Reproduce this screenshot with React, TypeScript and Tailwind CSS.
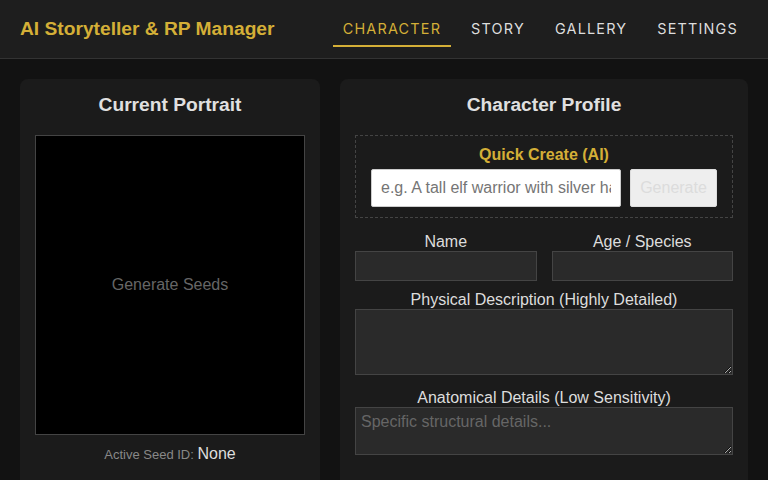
const tabs = ["Character", "Story", "Gallery", "Settings"];

function Field({ label, children }: { label: string; children: React.ReactNode }) {
  return (
    <div className="flex flex-col">
      <label className="text-center text-[16px] leading-[18px] text-[#dddddd]">{label}</label>
      {children}
    </div>
  );
}

export default function App() {
  return (
    <div className="min-h-screen bg-[#121212] font-['Liberation_Sans',Arial,sans-serif] text-[#e0e0e0]">
      <header className="flex h-[59px] items-center justify-between border-b border-[#333333] bg-[#1e1e1e] px-5">
        <h1 className="text-[19.2px] font-bold text-[#d4af37]">AI Storyteller &amp; RP Manager</h1>
        <nav className="flex h-full items-end gap-[10px] font-['Inter',sans-serif]">
          {tabs.map((t, i) => (
            <button
              key={t}
              className={
                i === 0
                  ? "mb-[11px] h-[38px] border-b-2 border-[#d4af37] px-[10px] pt-[3px] text-[14.4px] uppercase tracking-[1.2px] text-[#d4af37]"
                  : "mb-[11px] h-[38px] border-b-2 border-transparent px-[10px] pt-[3px] text-[14.4px] uppercase tracking-[1.2px] text-[#dddddd]"
              }
            >
              {t}
            </button>
          ))}
        </nav>
      </header>

      <main className="flex items-start gap-5 p-5">
        <section className="flex w-[300px] flex-col rounded-lg bg-[#1b1b1b] px-[15px] pt-[14px] pb-[40px]">
          <h2 className="text-center text-[19.2px] font-bold leading-[24px] text-[#e0e0e0]">Current Portrait</h2>
          <div className="mt-[18px] flex h-[300px] w-[270px] items-center justify-center border border-[#444444] bg-black">
            <span className="text-[16px] text-[#666666]">Generate Seeds</span>
          </div>
          <p className="mt-[7px] text-center">
            <span className="text-[13px] text-[#888888]">Active Seed ID: </span>
            <span className="text-[16px] text-[#dddddd]">None</span>
          </p>
        </section>

        <section className="flex w-[408px] flex-col rounded-lg bg-[#1b1b1b] px-[15px] pt-[14px] pb-[40px]">
          <h2 className="text-center text-[19.2px] font-bold leading-[24px] text-[#e0e0e0]">Character Profile</h2>
          <div className="mt-[18px] flex flex-col items-center border border-dashed border-[#444444] px-[15px] pt-[9px] pb-[10px]">
            <h3 className="text-[16px] font-bold leading-[20px] text-[#d4af37]">Quick Create (AI)</h3>
            <div className="mt-[4px] flex w-full gap-[9px]">
              <input
                className="h-[38px] w-[250px] rounded-[2px] border border-[#cccccc] bg-white px-[9px] text-[16px] text-black placeholder:text-[#757575]"
                placeholder="e.g. A tall elf warrior with silver hair"
              />
              <button
                disabled
                className="h-[38px] w-[87px] rounded-[2px] border border-[#dddddd] bg-[#eeeeee] text-[16px] text-[#dcdcdc]"
              >
                Generate
              </button>
            </div>
          </div>

          <div className="mt-[15px] grid grid-cols-2 gap-[15px]">
            <Field label="Name">
              <input className="h-[30px] border border-[#444444] bg-[#2a2a2a] px-[6px] text-[16px] text-[#e0e0e0]" />
            </Field>
            <Field label="Age / Species">
              <input className="h-[30px] border border-[#444444] bg-[#2a2a2a] px-[6px] text-[16px] text-[#e0e0e0]" />
            </Field>
          </div>

          <div className="mt-[10px]">
            <Field label="Physical Description (Highly Detailed)">
              <textarea className="h-[66px] border border-[#444444] bg-[#2a2a2a] px-[6px] py-[2px] text-[16px] text-[#e0e0e0]" />
            </Field>
          </div>

          <div className="mt-[14px]">
            <Field label="Anatomical Details (Low Sensitivity)">
              <textarea
                className="h-[48px] border border-[#444444] bg-[#2a2a2a] px-[5px] py-[2px] text-[16px] text-[#e0e0e0] placeholder:text-[#666666]"
                placeholder="Specific structural details..."
              />
            </Field>
          </div>
        </section>
      </main>
    </div>
  );
}
